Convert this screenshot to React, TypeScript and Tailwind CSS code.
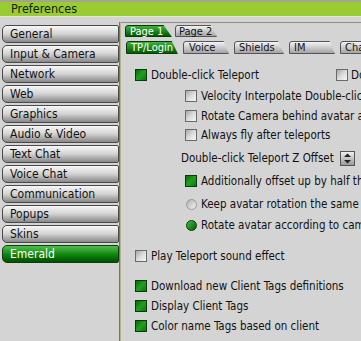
import React from 'react';

const navItems = [
  'General',
  'Input & Camera',
  'Network',
  'Web',
  'Graphics',
  'Audio & Video',
  'Text Chat',
  'Voice Chat',
  'Communication',
  'Popups',
  'Skins',
  'Emerald',
];

const Check: React.FC<{ on?: boolean }> = ({ on }) => (
  <span
    className={
      on
        ? 'w-[12px] h-[12px] shrink-0 border border-[#0a3a0a] bg-linear-to-br from-[#0c6a0c] via-[#1ea01e] to-[#0a7a0a]'
        : 'w-[12px] h-[12px] shrink-0 border border-[#6a6a6a] bg-linear-to-br from-[#a8a8a8] via-[#dcdcdc] to-[#f6f6f6]'
    }
  />
);

const Radio: React.FC<{ on?: boolean }> = ({ on }) => (
  <span
    className={
      on
        ? 'w-[11px] h-[11px] shrink-0 rounded-full border border-[#0a3a0a] bg-linear-to-br from-[#40c040] to-[#006000]'
        : 'w-[11px] h-[11px] shrink-0 rounded-full border border-[#9a9a9a] bg-linear-to-br from-[#b0b0b0] to-[#f4f4f4]'
    }
  />
);

const Row: React.FC<{ className: string; children: React.ReactNode }> = ({ className, children }) => (
  <div className={`flex items-center h-[20px] whitespace-nowrap ${className}`}>{children}</div>
);

export default function App() {
  return (
    <div className="w-[361px] h-[341px] overflow-hidden bg-[#d4d4d4] text-[#111] font-['DejaVu_Sans_Condensed','DejaVu_Sans',sans-serif] font-stretch-condensed">
      {/* Title bar */}
      <div className="h-[2px] bg-[#a2a68e]" />
      <div className="h-[14px] bg-[#99cc33] pl-[11px] text-[12.5px] leading-[14px] text-[#14200a]">Preferences</div>
      <div className="h-[1px] bg-[#e2e8d0]" />

      <div className="flex">
        {/* Sidebar */}
        <div className="w-[119px] shrink-0 pl-[2px] pt-[8px] flex flex-col gap-[2px]">
          {navItems.map((item) =>
            item === 'Emerald' ? (
              <div
                key={item}
                className="h-[18px] rounded-l-[5px] rounded-r-[2px] border border-[#123a12] bg-linear-to-b from-[#4cc04c] via-[#108a10] to-[#005000] pl-[7px] text-[12px] leading-[16px] text-white"
              >
                {item}
              </div>
            ) : (
              <div
                key={item}
                className="h-[18px] rounded-l-[5px] rounded-r-[2px] border border-[#4a4a4a] bg-linear-to-b from-[#f8f8f8] via-[#d2d2d2] to-[#888888] pl-[7px] text-[12px] leading-[16px]"
              >
                {item}
              </div>
            ),
          )}
        </div>

        {/* Divider */}
        <div className="w-[2px] shrink-0 mt-[5px] h-[320px] bg-[#7a7a44] border-r border-[#b4b48a]" />

        {/* Content */}
        <div className="flex-1 min-w-0 mt-[5px] border-t border-[#8e8e80] overflow-hidden">
          {/* Page tabs */}
          <div className="flex items-end gap-[3px] pl-[4px] pt-[2px] h-[14px] text-[11px] leading-[11px]">
            <div className="w-[47px] h-[12px] shrink-0 rounded-tl-[3px] border border-[#0c3a0c] bg-linear-to-b from-[#3cb43c] to-[#005c00] pl-[4px] text-white [clip-path:polygon(0_0,82%_0,100%_100%,0_100%)]">
              Page 1
            </div>
            <div className="w-[42px] h-[12px] shrink-0 rounded-tl-[3px] border border-[#555] bg-linear-to-b from-[#f4f4f4] to-[#a4a4a4] pl-[3px] [clip-path:polygon(0_0,85%_0,100%_100%,0_100%)]">
              Page 2
            </div>
          </div>

          {/* Section tabs */}
          <div className="flex items-end gap-[5px] pl-[5px] pt-[3px] h-[17px] text-[11px] leading-[12px]">
            <div className="w-[52px] h-[13px] shrink-0 rounded-tl-[3px] border border-[#0c3a0c] bg-linear-to-b from-[#3cb43c] to-[#005c00] pl-[4px] text-white [clip-path:polygon(0_0,88%_0,100%_100%,0_100%)]">
              TP/Login
            </div>
            <div className="w-[46px] h-[13px] shrink-0 rounded-tl-[3px] border border-[#555] bg-linear-to-b from-[#f4f4f4] to-[#a4a4a4] pl-[5px] [clip-path:polygon(0_0,88%_0,100%_100%,0_100%)]">
              Voice
            </div>
            <div className="w-[50px] h-[13px] shrink-0 rounded-tl-[3px] border border-[#555] bg-linear-to-b from-[#f4f4f4] to-[#a4a4a4] pl-[4px] [clip-path:polygon(0_0,88%_0,100%_100%,0_100%)]">
              Shields
            </div>
            <div className="w-[46px] h-[13px] shrink-0 rounded-tl-[3px] border border-[#555] bg-linear-to-b from-[#f4f4f4] to-[#a4a4a4] pl-[4px] [clip-path:polygon(0_0,88%_0,100%_100%,0_100%)]">
              IM
            </div>
            <div className="w-[40px] h-[13px] shrink-0 rounded-tl-[3px] border border-[#555] bg-linear-to-b from-[#f4f4f4] to-[#a4a4a4] pl-[4px]">
              Chat
            </div>
          </div>

          {/* Panel */}
          <div className="text-[11.5px] leading-[13px]">
            <Row className="mt-[11px] pl-[14px]">
              <Check on />
              <span className="ml-[4px]">Double-click Teleport</span>
              <span className="ml-[77px] flex items-center">
                <Check />
                <span className="ml-[3px]">Do</span>
              </span>
            </Row>
            <Row className="mt-[1px] pl-[64px]">
              <Check />
              <span className="ml-[4px]">Velocity Interpolate Double-click</span>
            </Row>
            <Row className="pl-[64px]">
              <Check />
              <span className="ml-[4px]">Rotate Camera behind avatar after</span>
            </Row>
            <Row className="-mt-[1px] pl-[64px]">
              <Check />
              <span className="ml-[4px]">Always fly after teleports</span>
            </Row>
            <Row className="mt-[3px] pl-[60px]">
              <span>Double-click Teleport Z Offset</span>
              <span className="ml-[6px] w-[15px] h-[15px] shrink-0 border border-[#555] bg-linear-to-b from-[#f0f0f0] to-[#9a9a9a] flex items-center justify-center">
                <svg width="9" height="11" viewBox="0 0 9 11">
                  <path d="M4.5 0.5 L8 4 H1 Z" fill="#222" />
                  <path d="M4.5 10.5 L8 7 H1 Z" fill="#222" />
                </svg>
              </span>
            </Row>
            <Row className="mt-[3px] pl-[64px]">
              <Check on />
              <span className="ml-[4px]">Additionally offset up by half the</span>
            </Row>
            <Row className="mt-[3px] pl-[65px]">
              <Radio />
              <span className="ml-[4px]">Keep avatar rotation the same when</span>
            </Row>
            <Row className="mt-[1px] pl-[65px]">
              <Radio on />
              <span className="ml-[4px]">Rotate avatar according to camera</span>
            </Row>
            <Row className="mt-[11px] pl-[14px]">
              <Check />
              <span className="ml-[4px]">Play Teleport sound effect</span>
            </Row>
            <Row className="mt-[10px] pl-[14px]">
              <Check on />
              <span className="ml-[4px]">Download new Client Tags definitions</span>
            </Row>
            <Row className="pl-[14px]">
              <Check on />
              <span className="ml-[4px]">Display Client Tags</span>
            </Row>
            <Row className="pl-[14px]">
              <Check on />
              <span className="ml-[4px]">Color name Tags based on client</span>
            </Row>
          </div>
        </div>
      </div>
    </div>
  );
}
